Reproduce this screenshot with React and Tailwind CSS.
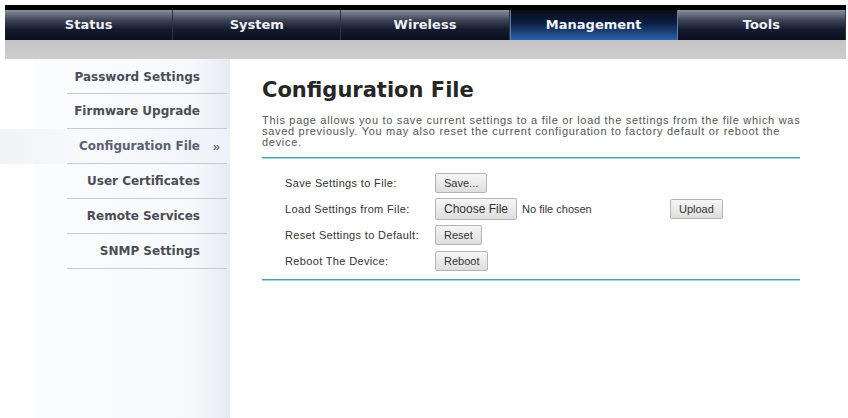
import React from "react";

const tabs = ["Status", "System", "Wireless", "Management", "Tools"];

const menu = [
  "Password Settings",
  "Firmware Upgrade",
  "Configuration File",
  "User Certificates",
  "Remote Services",
  "SNMP Settings",
];

function Btn({ children, className = "" }) {
  return (
    <button
      className={
        "h-[20px] px-[8px] border border-[#b4b4b4] rounded-[2px] bg-[linear-gradient(to_bottom,#f6f6f6,#dedede)] text-[11px] tracking-normal text-[#333] leading-none " +
        className
      }
    >
      {children}
    </button>
  );
}

export default function App() {
  return (
    <div className="w-[848px] h-[418px] overflow-hidden bg-white font-['Liberation_Sans',Arial,sans-serif]">
      {/* top nav */}
      <div className="pt-[5px] pl-[5px] pr-[2px]">
        <div className="h-[5px] bg-black" />
        <div className="grid grid-cols-5 h-[30px]">
          {tabs.map((t) => {
            const active = t === "Management";
            return (
              <div
                key={t}
                className={
                  active
                    ? "flex items-center justify-center bg-[linear-gradient(to_bottom,#060b18_0%,#0d1f44_45%,#2a64ad_100%)] border-x border-[#5d7ea8] font-['DejaVu_Sans',sans-serif] font-bold text-[13px] text-[#f2f4f8]"
                    : "flex items-center justify-center bg-[linear-gradient(to_bottom,#8a909c_0%,#3a4254_35%,#141b2e_65%,#0a0f1c_100%)] border-r border-[#2c3343] font-['DejaVu_Sans',sans-serif] font-bold text-[13px] text-[#eef0f4]"
                }
              >
                {t}
              </div>
            );
          })}
        </div>
        <div className="h-[19px] bg-[linear-gradient(to_bottom,#c4c4c4,#cdcdcd)]" />
      </div>

      <div className="flex">
        {/* sidebar */}
        <div className="w-[230px] h-[360px] pl-[35px]">
          <div className="h-full bg-[linear-gradient(to_right,#fbfcfe_0%,#f7f9fc_80%,#e6ebf3_100%)] pt-[1px]">
            {menu.map((m, i) => {
              const active = m === "Configuration File";
              return (
                <div
                  key={m}
                  className={
                    active
                      ? "relative -ml-[35px] pl-[67px] bg-[linear-gradient(to_right,#f1f3f7_0%,#f9fafc_40%,#eef2f8_100%)]"
                      : "relative pl-[32px]"
                  }
                >
                  <div
                    className={
                      (i === 0 ? "h-[34px] " : "h-[35px] ") +
                      "mr-[3px] border-b border-[#c6cad2] flex items-center justify-end pr-[27px] font-['DejaVu_Sans',sans-serif] font-bold text-[12px] " +
                      (active ? "text-[#5a6170]" : "text-[#4a4d55]")
                    }
                  >
                    {m}
                  </div>
                  {active && (
                    <span className="absolute right-[10px] top-[8px] text-[13px] font-bold text-[#6a7384]">
                      »
                    </span>
                  )}
                </div>
              );
            })}
          </div>
        </div>

        {/* main */}
        <div className="ml-[32px] pt-[18px] w-[538px]">
          <h1 className="font-['DejaVu_Sans',sans-serif] font-bold text-[21px] leading-[26px] text-[#262626]">
            Configuration File
          </h1>
          <p className="mt-[12px] text-[11px] leading-[11px] tracking-[0.7px] text-[#555] whitespace-nowrap">
            This page allows you to save current settings to a file or load the settings from the file which was
            <br />
            saved previously. You may also reset the current configuration to factory default or reboot the
            <br />
            device.
          </p>
          <div className="mt-[9px] h-[2px] bg-[#4f9fb2] border-b border-[#a9d3dc]" />

          <div className="mt-[11px] pl-[23px] text-[11px] tracking-[0.35px] text-[#333]">
            <div className="flex items-center h-[26px]">
              <span className="w-[150px]">Save Settings to File:</span>
              <Btn>Save...</Btn>
            </div>
            <div className="flex items-center h-[26px]">
              <span className="w-[150px]">Load Settings from File:</span>
              <div className="w-[235px] flex items-center">
                <Btn className="h-[22px] px-[6px] text-[12px]">Choose File</Btn>
                <span className="ml-[5px] tracking-normal">No file chosen</span>
              </div>
              <Btn>Upload</Btn>
            </div>
            <div className="flex items-center h-[26px]">
              <span className="w-[150px]">Reset Settings to Default:</span>
              <Btn>Reset</Btn>
            </div>
            <div className="flex items-center h-[26px]">
              <span className="w-[150px]">Reboot The Device:</span>
              <Btn>Reboot</Btn>
            </div>
          </div>
          <div className="mt-[5px] h-[2px] bg-[#4f9fb2] border-b border-[#a9d3dc]" />
        </div>
      </div>
    </div>
  );
}
